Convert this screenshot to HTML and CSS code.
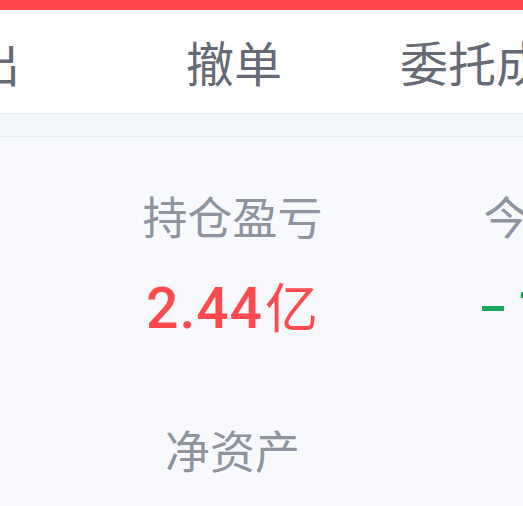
FILE: index.html
```html
<!DOCTYPE html>
<html lang="zh-CN">
  <head>
    <meta charset="UTF-8" />
    <meta name="viewport" content="width=device-width, initial-scale=1.0" />
    <title>持仓</title>
    <link rel="stylesheet" href="styles.css">
  </head>
  <body>
    <div class="topbar"></div>

    <div class="tabs">
      <div class="tab">卖出</div>
      <div class="tab">撤单</div>
      <div class="tab">委托成交</div>
    </div>
    <div class="band"></div>

    <div class="stats">
      <div class="stat">
        <div class="label">持仓盈亏</div>
        <div class="value up">2.44<span class="unit">亿</span></div>
      </div>
      <div class="stat">
        <div class="label">今日盈亏</div>
        <div class="value down"><span class="minus"></span>1.02<span class="unit">万</span></div>
      </div>
      <div class="stat">
        <div class="label">净资产</div>
        <div class="value"></div>
      </div>
    </div>
  </body>
</html>
```

FILE: styles.css
```css
body {
  font-family: "Noto Sans CJK SC", "Noto Sans", sans-serif;
  margin: 0;
  padding: 0;
  height: 100vh;
  overflow: hidden;
  background: #f8f9fd;
}
.topbar {
  height: 10px;
  background-color: #ff484b;
}
.tabs {
  display: flex;
  height: 103px;
  margin-left: -159px;
  background-color: #fff;
  border-bottom: 1px solid #e9ecf0;
}
.tab {
  flex: 0 0 262px;
  text-align: center;
  line-height: 103px;
  font-size: 48px;
  color: #666a75;
  white-space: nowrap;
}
.band {
  height: 22px;
  background-color: #f3f6fa;
  border-bottom: 1px solid #e6eaf1;
}
.stats {
  display: grid;
  grid-template-columns: repeat(2, 341px);
  margin-left: 62px;
  padding-top: 44px;
  row-gap: 70px;
}
.stat {
  text-align: center;
  white-space: nowrap;
}
.label {
  font-size: 45px;
  line-height: 70px;
  color: #8f949f;
}
.value {
  font-family: Roboto, "Noto Sans", sans-serif;
  font-weight: 500;
  font-size: 57px;
  line-height: 80px;
  height: 80px;
  margin-top: 14px;
  letter-spacing: 1px;
}
.value .minus {
  display: inline-block;
  width: 22px;
  height: 5px;
  background-color: currentColor;
  vertical-align: 17px;
  margin: 0 12px 0 24px;
}
.value .unit {
  font-family: "Noto Sans CJK SC", sans-serif;
  font-weight: normal;
  font-size: 53px;
  margin-left: 2px;
}
.up {
  color: #ff4a4d;
}
.down {
  color: #19a95a;
}
```
